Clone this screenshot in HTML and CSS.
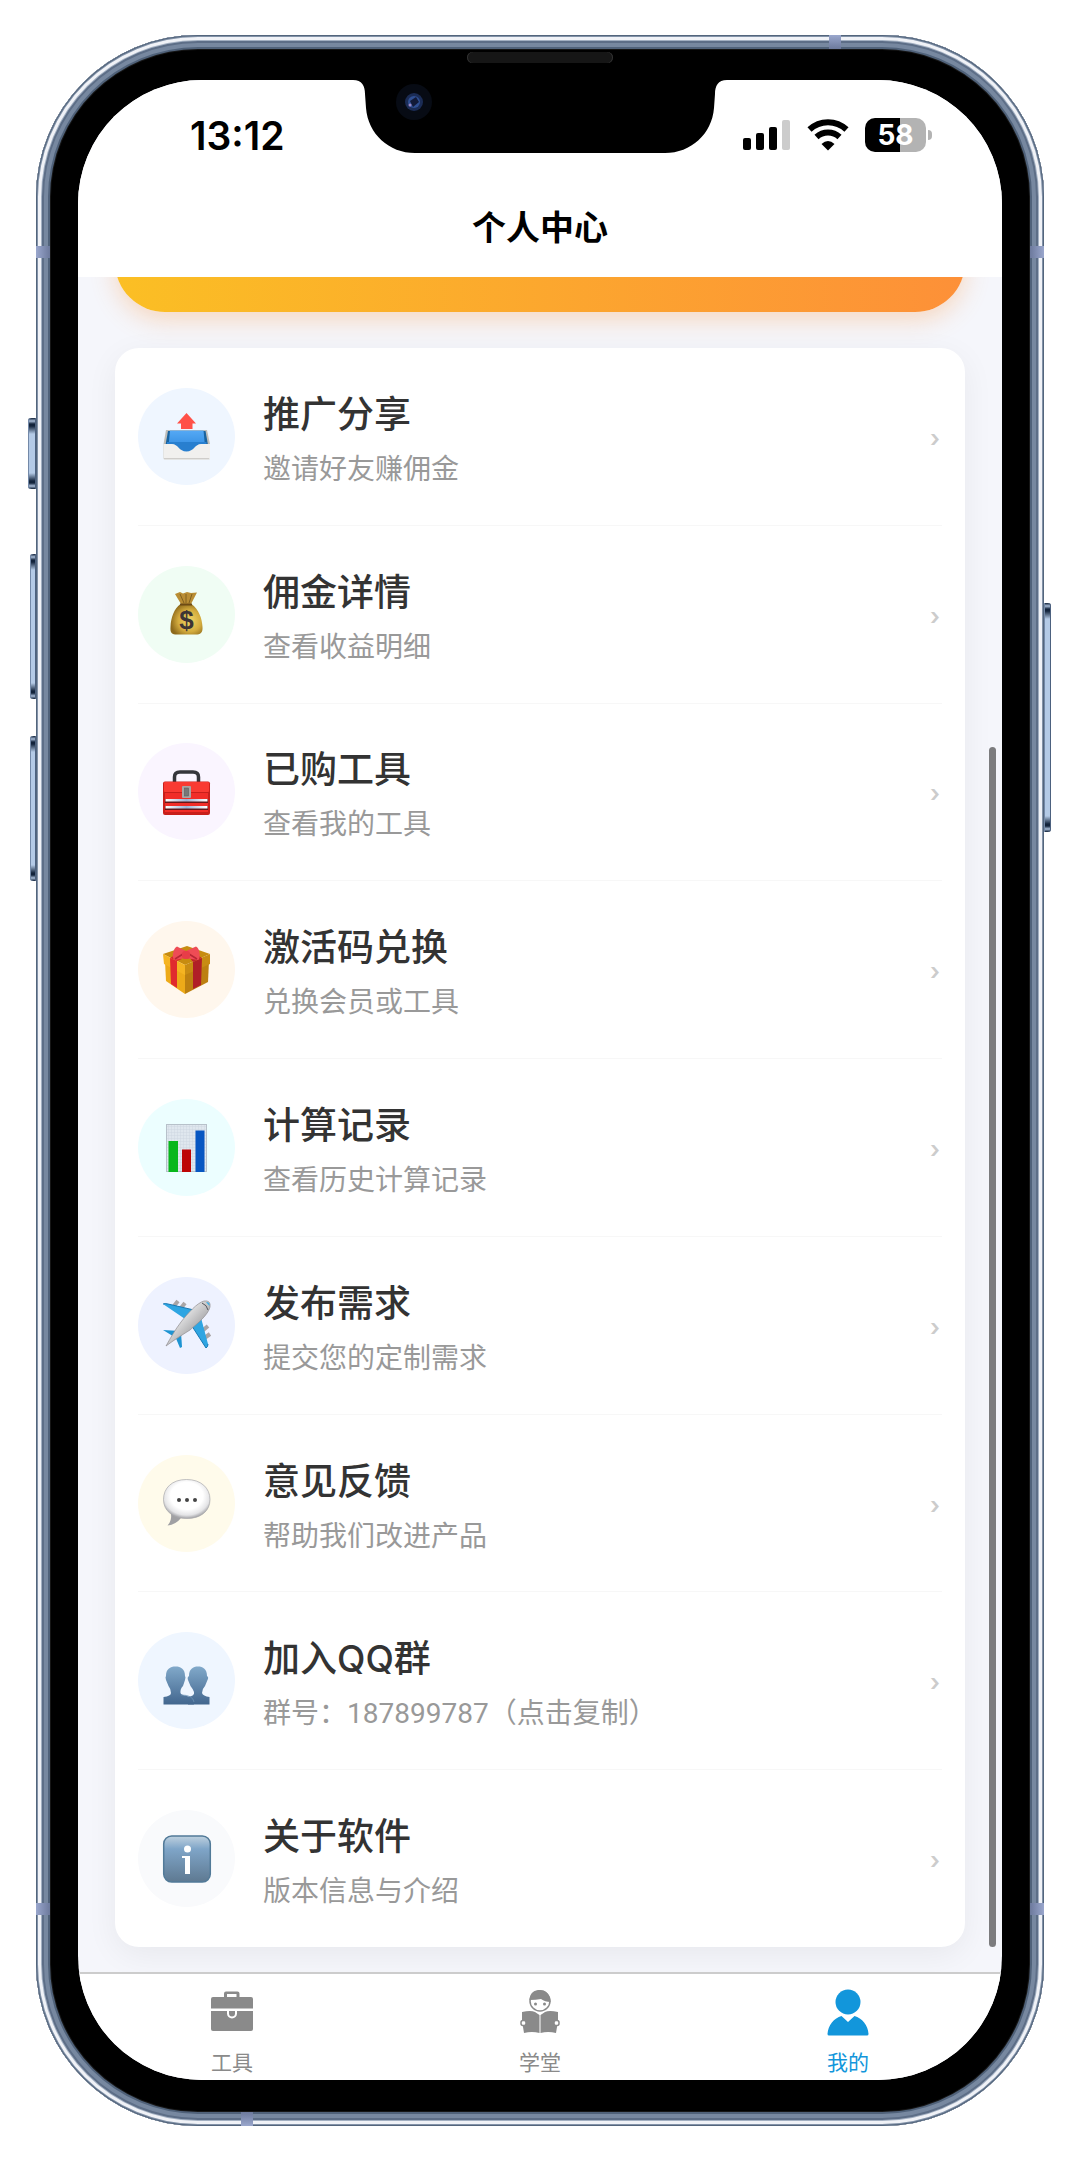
FILE: index.html
```html
<!DOCTYPE html>
<html lang="zh-CN">
<head>
  <meta charset="UTF-8">
  <title>个人中心</title>
  <meta name="viewport" content="width=device-width, initial-scale=1">
  <link rel="stylesheet" href="styles.css">
</head>
<body>
  <div class="phone">
    <i class="key key-mute"></i>
    <i class="key key-up"></i>
    <i class="key key-down"></i>
    <i class="key key-power"></i>
    <i class="band band-lt"></i>
    <i class="band band-lb"></i>
    <i class="band band-rt"></i>
    <i class="band band-rb"></i>
    <i class="band band-top"></i>
    <i class="band band-bottom"></i>
    <i class="speaker"></i>

    <div class="screen">
      <svg class="notch" width="374" height="74" viewBox="0 0 374 74">
        <path d="M0 0C9 0 12 6 12 14L13 28C15 54 36 73 62 73H312C338 73 359 54 361 28L362 14C362 6 365 0 374 0Z" fill="#000"/>
        <circle cx="61" cy="22" r="18" fill="#070b14"/>
        <circle cx="61" cy="22" r="9" fill="#1b2c55"/>
        <circle cx="61" cy="22" r="6" fill="#2f4f92"/>
        <path d="M57 21l6-4 3 5-6 5z" fill="#121a38"/>
        <circle cx="57" cy="25" r="1.500" fill="#9a86c4"/>
      </svg>

      <header class="header">
        <div class="status">
          <span class="time">13:12</span>
          <span class="signals">
            <svg width="48" height="32" viewBox="0 0 48 32">
              <rect x="0" y="19" width="8" height="12" rx="2"/>
              <rect x="13" y="14" width="8" height="17" rx="2"/>
              <rect x="26" y="8" width="8" height="23" rx="2"/>
              <rect x="39" y="1" width="8" height="30" rx="2" fill="#ccc"/>
            </svg>
            <svg width="42" height="32" viewBox="0 0 42 32">
              <path d="M2.500 10.500A27 27 0 0 1 39.500 10.500" fill="none" stroke="#000" stroke-width="6"/>
              <path d="M9.500 18A17 17 0 0 1 32.500 18" fill="none" stroke="#000" stroke-width="6"/>
              <path d="M14.500 25Q21 19 27.500 25L21 31.500Z"/>
            </svg>
            <span class="battery">58</span>
          </span>
        </div>
        <h1 class="title">个人中心</h1>
      </header>

      <main class="content">
        <div class="vip"></div>

        <nav class="menu">
          <a class="item" href="#">
            <span class="icon blue">
              <svg viewBox="0 0 48 48">
                <defs>
                  <linearGradient id="tray" x2="0" y2="1"><stop offset="0" stop-color="#55a9f5"/><stop offset="1" stop-color="#2a86dc"/></linearGradient>
                </defs>
                <path d="M23.500 1L33 11.500H29.500V17H18V11.500H14Z" fill="#ff5148"/>
                <path d="M3 18H44L47 32V46Q47 47.500 45.500 47.500H2Q.5 47.500 .5 46V32Z" fill="#bfbdb8"/>
                <path d="M5 19H42.500L45 33V36H2.500V33Z" fill="#19639f"/>
                <path d="M7 18.500H40.500L42.500 40H5Z" fill="url(#tray)"/>
                <path d="M4 30H43.500V40H4Z" fill="#287fcf"/>
                <path d="M.5 32H9C15 32 16 39.500 23.500 39.500S32 32 38 32H47V46Q47 47.500 45.500 47.500H2Q.5 47.500 .5 46Z" fill="#f1f0ee"/>
                <path d="M1 46.500H46" stroke="#cfcdca" fill="none"/>
              </svg>
            </span>
            <span class="text"><b>推广分享</b><small>邀请好友赚佣金</small></span>
            <span class="arrow">›</span>
          </a>

          <a class="item" href="#">
            <span class="icon green">
              <svg viewBox="0 0 48 48">
                <defs>
                  <radialGradient id="bag" cx=".6" cy=".55" r=".6"><stop offset="0" stop-color="#f0d768"/><stop offset=".6" stop-color="#d3ab3d"/><stop offset="1" stop-color="#8e6a1b"/></radialGradient>
                </defs>
                <path d="M12 4L17 2 20 3.500 24 2 28 3 34 2.500 28 14H18Z" fill="#b98d34"/>
                <path d="M17 4L21 13M23 4V13M29 4L26 13" stroke="#80601f" fill="none"/>
                <path d="M17.500 14H28.500C36 20 39 28 39.500 37C40 43 37 44.500 33 44.500H14C9 44.500 7 43 7.500 37C8 27 11 19 17.500 14Z" fill="url(#bag)"/>
                <path d="M17 14.500H29" stroke="#6d4b15" stroke-width="2"/>
                <text x="23.500" y="39" text-anchor="middle" font-family="Liberation Sans" font-size="26" font-weight="700" fill="#3c3435">$</text>
              </svg>
            </span>
            <span class="text"><b>佣金详情</b><small>查看收益明细</small></span>
            <span class="arrow">›</span>
          </a>

          <a class="item" href="#">
            <span class="icon purple">
              <svg viewBox="0 0 48 48">
                <defs>
                  <linearGradient id="steel"><stop offset="0" stop-color="#fff"/><stop offset=".5" stop-color="#9bb4d6"/><stop offset="1" stop-color="#fff"/></linearGradient>
                </defs>
                <path d="M11.500 14V9Q11.500 4 17 4H30Q35.500 4 35.500 9V14" fill="none" stroke="#35363b" stroke-width="3.500"/>
                <rect x="0" y="13.500" width="47" height="33.500" rx="2" fill="#c81f1b"/>
                <rect x="1" y="14" width="45" height="10" rx="1" fill="#f93a32"/>
                <rect x="2" y="25" width="43" height="19" fill="#f12d28"/>
                <rect x="2" y="31" width="43" height="4" fill="#641718"/>
                <rect x="2.500" y="31" width="42" height="2.500" fill="url(#steel)"/>
                <rect x="2" y="38" width="43" height="4" fill="#641718"/>
                <rect x="2.500" y="38" width="42" height="2.500" fill="url(#steel)"/>
                <rect x="19" y="18" width="9" height="12" rx="1" fill="#a9a4a4"/>
                <rect x="21.500" y="20" width="4" height="8" fill="#777" stroke="#555" stroke-width=".5"/>
              </svg>
            </span>
            <span class="text"><b>已购工具</b><small>查看我的工具</small></span>
            <span class="arrow">›</span>
          </a>

          <a class="item" href="#">
            <span class="icon orange">
              <svg viewBox="0 0 48 48">
                <path d="M2 15L22 24V48L3 35Z" fill="#edaa19"/>
                <path d="M22 24L46 15 45 36 22 48Z" fill="#bd8010"/>
                <path d="M0 8L24 0 47 8 22 19Z" fill="#c78c10"/>
                <path d="M0 8L22 19V29L1 18Z" fill="#f5b422"/>
                <path d="M22 19L47 8V18L22 29Z" fill="#c88c13"/>
                <path d="M7 12L14 15V42L8 38Z" fill="#e02a2e"/>
                <path d="M30 16L39 12 38 39 30 43Z" fill="#b01f27"/>
                <path d="M7 12L12 9 19 13 14 15Z" fill="#d9262d"/>
                <path d="M39 12L34 9 27 12 30 16Z" fill="#c2222a"/>
                <path d="M22 12L12 14C8 13 10 2 14 .5L23 5 33 .5C37 2 38 13 35 14Z" fill="#ee4c55"/>
                <path d="M12 13L20 8M34 13L26 8" stroke="#b72634" stroke-width="1.500"/>
                <rect x="19" y="5" width="8" height="8" rx="3" fill="#e83c48"/>
              </svg>
            </span>
            <span class="text"><b>激活码兑换</b><small>兑换会员或工具</small></span>
            <span class="arrow">›</span>
          </a>

          <a class="item" href="#">
            <span class="icon cyan">
              <svg viewBox="0 0 48 48">
                <defs>
                  <pattern id="grid" width="3" height="3" patternUnits="userSpaceOnUse"><path d="M3 0V3H0" stroke="#c9d3dc" stroke-width=".7" fill="none"/></pattern>
                </defs>
                <rect x="3" y="0" width="41" height="48" fill="#dfe7ee"/>
                <rect x="3" y="0" width="41" height="48" fill="url(#grid)"/>
                <rect x="3.500" y=".5" width="40" height="47" fill="none" stroke="#b7c1ca"/>
                <rect x="5.500" y="17" width="9.500" height="31" fill="#08b71c"/>
                <rect x="19" y="25.500" width="9" height="22.500" fill="#bd0505"/>
                <rect x="32.500" y="6.500" width="9" height="41.500" fill="#0757c2"/>
              </svg>
            </span>
            <span class="text"><b>计算记录</b><small>查看历史计算记录</small></span>
            <span class="arrow">›</span>
          </a>

          <a class="item" href="#">
            <span class="icon indigo">
              <svg viewBox="0 0 48 48">
                <defs>
                  <linearGradient id="hull" x2="1" y2="1"><stop offset=".2" stop-color="#fff"/><stop offset=".8" stop-color="#8f8f92"/></linearGradient>
                </defs>
                <path d="M11 5L15 0M18 7L22 2M39 30L45 25M40 38L47 33" stroke="#a9a5a6" stroke-width="4"/>
                <path d="M0 3Q2 2 5 3L31 9 25 20Z" fill="#2ea5e2"/>
                <path d="M0 3Q2 2 5 3L31 9" fill="none" stroke="#1778b4"/>
                <path d="M27 22L37 13 45 43Q45 46 43 47Z" fill="#2ea5e2"/>
                <path d="M45 43Q45 46 43 47L27 22" fill="none" stroke="#1778b4"/>
                <path d="M0 29L17 30 13 37Z" fill="#1e94d2"/>
                <path d="M12 35L18 31 19 46 17 47Z" fill="#1e94d2"/>
                <path d="M3 45C8 36 12 29 18 21C25 12 34 2 41 0Q48-1 47 6C45 14 35 22 27 29C19 34 11 39 3 45Z" fill="url(#hull)" stroke="#908e91" stroke-width=".7"/>
                <path d="M39 2Q44 4 45 9" stroke="#55545b" fill="none"/>
                <path d="M43 1Q47 1 46.500 5Z" fill="#38b1ea"/>
              </svg>
            </span>
            <span class="text"><b>发布需求</b><small>提交您的定制需求</small></span>
            <span class="arrow">›</span>
          </a>

          <a class="item" href="#">
            <span class="icon yellow">
              <svg viewBox="0 0 48 48">
                <defs>
                  <radialGradient id="bubble" cx=".5" cy=".42" r=".58"><stop offset=".6" stop-color="#fff"/><stop offset=".85" stop-color="#e4e4e6"/><stop offset="1" stop-color="#a3a3a7"/></radialGradient>
                </defs>
                <path d="M8 34Q9 42 4.500 46.500Q13 45.500 18 39Z" fill="#a0a0a3"/>
                <path d="M23.500 .5C38 .5 47 9 47 20.500C47 32 38 39.500 24 39.500C10 39.500 .5 32 .5 20.500C.5 9 9 .5 23.500 .5Z" fill="url(#bubble)" stroke="#a9a9ac" stroke-width=".7"/>
                <circle cx="16" cy="21" r="2" fill="#444"/>
                <circle cx="24" cy="21" r="2" fill="#444"/>
                <circle cx="32" cy="21" r="2" fill="#444"/>
              </svg>
            </span>
            <span class="text"><b>意见反馈</b><small>帮助我们改进产品</small></span>
            <span class="arrow">›</span>
          </a>

          <a class="item" href="#">
            <span class="icon blue">
              <svg viewBox="0 0 48 48">
                <defs>
                  <linearGradient id="people" gradientUnits="userSpaceOnUse" x1="0" y1="9" x2="0" y2="48"><stop offset="0" stop-color="#82aacb"/><stop offset="1" stop-color="#41658d"/></linearGradient>
                </defs>
                <g fill="url(#people)">
                  <path d="M25 47.500V40Q32 39 31 35Q30 32 27.500 29L25 23Q24 20 26 19C26 12 30 9.500 35 9.500S44 12 44 19Q46 20 44.500 23L42 29Q39 32 39 36Q40 39 46.500 40V47.500Z"/>
                  <path d="M.5 47.500V40Q8 39 8 36Q8 32 5.500 29L3 23Q2 20 3 19C3 12 7 9.500 12.500 9.500S22 12 22 19Q23 20 22 23L20 29Q17 32 17.500 36Q18 38 24 39Q30 40 31 47.500Z"/>
                </g>
                <path d="M18 38Q30 38 31 45" fill="none" stroke="#6b91b4" stroke-width=".8"/>
              </svg>
            </span>
            <span class="text"><b>加入QQ群</b><small>群号：187899787（点击复制）</small></span>
            <span class="arrow">›</span>
          </a>

          <a class="item" href="#">
            <span class="icon gray">
              <svg viewBox="0 0 48 48">
                <defs>
                  <linearGradient id="info" x2="0" y2="1"><stop offset="0" stop-color="#bfd1df"/><stop offset=".28" stop-color="#7fa5c8"/><stop offset="1" stop-color="#5e7991"/></linearGradient>
                </defs>
                <rect x=".7" y="1" width="46.600" height="46" rx="8" fill="url(#info)" stroke="#527a98" stroke-width="1.500"/>
                <circle cx="24.500" cy="14" r="3.500" fill="#fff"/>
                <rect x="22" y="21" width="5" height="18" fill="#fff"/>
                <rect x="19" y="21" width="6" height="2" fill="#fff"/>
              </svg>
            </span>
            <span class="text"><b>关于软件</b><small>版本信息与介绍</small></span>
            <span class="arrow">›</span>
          </a>
        </nav>
        <i class="scrollbar"></i>
      </main>

      <nav class="tabbar">
        <a class="tab" href="#">
          <svg viewBox="0 0 48 48">
            <path d="M16 9V5.500Q16 3.500 18 3.500H29.500Q31.500 3.500 31.500 5.500V9H43Q45 9 45 11V20.500H3V11Q3 9 5 9ZM19 9H28.500V6H19Z" fill-rule="evenodd"/>
            <path d="M3 23H45V41Q45 43 43 43H5Q3 43 3 41Z"/>
            <path d="M20 21V25.500A4 4 0 0 0 28 25.500V21" fill="none" stroke="#fff" stroke-width="2"/>
            <path d="M22 23H26V25A2 2 0 0 1 22 25Z"/>
          </svg>
          工具
        </a>
        <a class="tab" href="#">
          <svg viewBox="0 0 48 48">
            <circle cx="24" cy="13" r="10" fill="#fff" stroke="currentColor" stroke-width="1.500"/>
            <path d="M13.500 12C14 4 19 2 24 2S34 5 34.500 14Q29 14 25 11Q20 12 13.500 12Z"/>
            <circle cx="19.500" cy="16" r="1.500"/>
            <circle cx="28.500" cy="16" r="1.500"/>
            <path d="M6 24Q15 22 19 24L23.500 27V45Q16 43 8 45L6 33Z"/>
            <path d="M42 24Q33 22 29 24L24.500 27V45Q32 43 40 45L42 33Z"/>
            <rect x="5" y="32.500" width="5" height="5" rx="2" fill="#fff" stroke="currentColor" stroke-width="1.500"/>
            <rect x="38" y="32.500" width="5" height="5" rx="2" fill="#fff" stroke="currentColor" stroke-width="1.500"/>
          </svg>
          学堂
        </a>
        <a class="tab active" href="#">
          <svg viewBox="0 0 48 48">
            <circle cx="24" cy="14" r="12.500"/>
            <path d="M17.500 28L24 34 30.500 28C38 30 44 37 44.500 46Q44.500 47.500 43 47.500H5Q3.500 47.500 3.500 46C4 37 10 30 17.500 28Z"/>
          </svg>
          我的
        </a>
      </nav>
    </div>
  </div>
</body>
</html>
```
FILE: styles.css
```css
* {
  box-sizing: border-box;
}

body {
  margin: 0;
  padding: 35px 36px 34px;
  min-height: 100vh;
  display: flex;
  background: #fff;
  font-family: Inter, "Noto Sans CJK SC", sans-serif;
}

a {
  color: inherit;
  text-decoration: none;
}

/* 手机外壳 */
.phone {
  position: relative;
  flex: 1;
  display: flex;
  padding: 45px 42px 46px;
  border-radius: 162px;
  background: #000;
  box-shadow: inset 0 0 0 1px #53657c, inset 0 0 0 2px #8292a8, inset 0 0 0 5px #f0f2f7, inset 0 0 0 6px #a3b0c2, inset 0 0 0 8px #5d6e87, inset 0 0 0 12px #7788a0, inset 0 0 0 14px #50627a, inset 0 0 0 15px #161616;
}

.key {
  position: absolute;
  width: 6px;
  left: -6px;
  border-radius: 3px 0 0 3px;
  background: linear-gradient(#0d1d33, #a9bdd8 3px, #12233b 6px, #12233b 8px, #b4cae6 16px, #b4cae6 calc(100% - 16px), #12233b calc(100% - 8px), #12233b calc(100% - 6px), #a9bdd8 calc(100% - 3px), #0d1d33);
  box-shadow: inset 1px 0 #7389a8, inset -1px 0 #4c617f;
}

.key-mute {
  top: 383px;
  left: -8px;
  width: 8px;
  height: 71px;
}

.key-up {
  top: 519px;
  height: 145px;
}

.key-down {
  top: 701px;
  height: 145px;
}

.key-power {
  top: 568px;
  left: auto;
  right: -7px;
  width: 7px;
  height: 229px;
  border-radius: 0 3px 3px 0;
}

.band {
  position: absolute;
  width: 14px;
  height: 12px;
  background: linear-gradient(90deg, #9aa7cd, #6c799c);
}

.band-lt { left: 0; top: 211px; }
.band-lb { left: 0; bottom: 211px; }
.band-rt { right: 0; top: 211px; }
.band-rb { right: 0; bottom: 211px; }

.band-rt, .band-rb {
  background: linear-gradient(270deg, #9aa7cd, #6c799c);
}

.band-top, .band-bottom {
  width: 12px;
  height: 14px;
}

.band-top {
  right: 203px;
  top: 0;
  background: linear-gradient(#9aa7cd, #6c799c);
}

.band-bottom {
  left: 205px;
  bottom: 0;
  background: linear-gradient(#6c799c, #9aa7cd);
}

.speaker {
  position: absolute;
  top: 17px;
  left: 0;
  right: 0;
  margin: 0 auto;
  width: 146px;
  height: 11px;
  border-radius: 6px;
  background: #161616;
  box-shadow: inset 1px 0 #333, inset -1px 0 #333;
}

.screen {
  position: relative;
  flex: 1;
  display: flex;
  flex-direction: column;
  overflow: hidden;
  border-radius: 124px;
  background: #f5f6fb;
}

.notch {
  position: absolute;
  top: 0;
  left: 0;
  right: 0;
  margin: 0 auto;
}

/* 顶部 */
.header {
  padding-bottom: 11px;
  background: #fff;
}

.status {
  height: 110px;
  padding: 0 70px 0 112px;
  display: flex;
  align-items: center;
  justify-content: space-between;
}

.time {
  font-size: 39px;
  font-weight: 600;
}

.signals {
  display: flex;
  align-items: center;
  gap: 16px;
}

.battery {
  position: relative;
  width: 61px;
  height: 34px;
  margin-right: 6px;
  border-radius: 10px;
  background: linear-gradient(90deg, #000 58%, #b3b3b3 58%);
  color: #fff;
  font-size: 28px;
  font-weight: 700;
  line-height: 34px;
  text-align: center;
}

.battery::after {
  content: "";
  position: absolute;
  top: 12px;
  right: -6px;
  width: 4px;
  height: 10px;
  border-radius: 0 4px 4px 0;
  background: #b3b3b3;
}

.title {
  margin: 0;
  font-size: 34px;
  font-weight: 600;
  line-height: 76px;
  text-align: center;
}

/* 内容区 */
.content {
  position: relative;
  flex: 1;
  display: flex;
  flex-direction: column;
  padding: 0 37px 25px;
  overflow: hidden;
}

.vip {
  height: 110px;
  margin: -75px 0 36px;
  flex: none;
  border-radius: 50px;
  background: linear-gradient(90deg, #fbbf24, #fd9038);
  box-shadow: 0 8px 24px rgba(251, 146, 60, 0.3);
}

.menu {
  flex: 1;
  display: flex;
  flex-direction: column;
  padding: 0 23px;
  border-radius: 24px;
  background: #fff;
  box-shadow: 0 8px 32px rgba(0, 0, 0, 0.06);
}

.item {
  flex: 1;
  display: flex;
  align-items: center;
  border-bottom: 1px solid #f7f7f7;
}

.item:last-child {
  border-bottom: 0;
}

.icon {
  width: 97px;
  height: 97px;
  display: flex;
  align-items: center;
  justify-content: center;
  border-radius: 50%;
}

.icon svg {
  width: 48px;
  height: 48px;
  overflow: visible;
}

.blue { background: #eff6ff; }
.green { background: #f0fdf4; }
.purple { background: #faf5ff; }
.orange { background: #fff7ed; }
.cyan { background: #ecfeff; }
.indigo { background: #eef2ff; }
.yellow { background: #fffbeb; }
.gray { background: #f9fafc; }

.text {
  flex: 1;
  display: flex;
  flex-direction: column;
  gap: 9px;
  margin-left: 28px;
  padding-top: 5px;
}

.text b {
  color: #333;
  font-size: 37px;
  font-weight: 500;
  line-height: 52px;
}

.text small {
  color: #999;
  font-family: Roboto, "Noto Sans CJK SC", sans-serif;
  font-size: 28px;
  font-weight: 400;
  line-height: 39px;
}

.arrow {
  padding: 4px 2px 0 0;
  color: #ccc;
  font-size: 24px;
  font-weight: 600;
}

.scrollbar {
  position: absolute;
  top: 470px;
  right: 6px;
  bottom: 25px;
  width: 7px;
  border-radius: 4px;
  background: #7c7c7e;
}

/* 底部导航 */
.tabbar {
  display: flex;
  height: 108px;
  border-top: 2px solid #ccc;
  background: #fff;
}

.tab {
  flex: 1;
  display: flex;
  flex-direction: column;
  align-items: center;
  gap: 12px;
  padding-top: 14px;
  color: #8a8a8a;
  font-size: 21px;
  font-weight: 400;
  line-height: 30px;
}

.tab svg {
  width: 48px;
  height: 48px;
  fill: currentColor;
}

.active {
  color: #1296db;
}
```
